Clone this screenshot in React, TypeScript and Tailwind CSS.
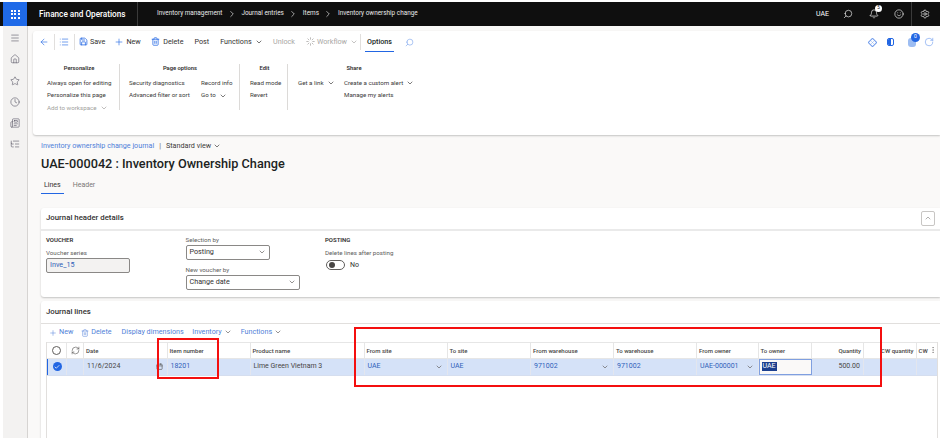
// Inventory ownership change journal, Finance and Operations style form.
import type { ReactNode } from "react";
import {
  ArrowLeft,
  Bell,
  Calendar,
  Check,
  ChevronDown,
  ChevronRight,
  ChevronUp,
  Clock,
  Home,
  List,
  ListTree,
  Loader,
  Menu,
  MoreVertical,
  Newspaper,
  Plus,
  RefreshCw,
  RotateCw,
  Save,
  Search,
  Settings,
  Smile,
  Star,
  Trash2,
  X,
} from "lucide-react";

const FONT = "font-['Roboto',sans-serif]";

function Crumb({ label, last }: { label: string; last?: boolean }) {
  return (
    <>
      <span className="text-[6.4px] text-[#e8e8e8]">{label}</span>
      {!last && <ChevronRight className="mx-[4.5px] h-[10px] w-[10px] text-[#e8e8e8]" strokeWidth={1.6} />}
    </>
  );
}

function Tool({
  icon,
  label,
  off,
  caret,
  ml,
}: {
  icon?: ReactNode;
  label: string;
  off?: boolean;
  caret?: boolean;
  ml: string;
}) {
  return (
    <span className={`flex items-center gap-[2px] text-[7.2px] ${ml} ${off ? "text-[#a8a6a4]" : "text-[#323130]"}`}>
      {icon}
      {label}
      {caret && <ChevronDown className="ml-[1px] h-[8px] w-[8px]" />}
    </span>
  );
}

function Sep({ ml }: { ml: string }) {
  return <span className={`h-[16px] w-px bg-[#e1dfdd] ${ml}`} />;
}

function Option({ label, off, caret }: { label: string; off?: boolean; caret?: boolean }) {
  return (
    <span className={`flex h-[12.5px] items-center gap-[3px] whitespace-nowrap text-[6.2px] ${off ? "text-[#a19f9d]" : "text-[#3b3a39]"}`}>
      {label}
      {caret && <ChevronDown className="h-[8px] w-[8px]" />}
    </span>
  );
}

function Group({ title, width, pl, children, last }: { title: string; width: string; pl: string; children: ReactNode; last?: boolean }) {
  return (
    <div className={`flex h-[46px] flex-col ${width} ${pl} ${last ? "" : "border-r border-[#dcdad8]"}`}>
      <div className="pr-[8px] text-center text-[5.8px] font-semibold leading-[8px] text-[#323130]">{title}</div>
      <div className="mt-[5px] flex">{children}</div>
    </div>
  );
}

function Dropdown({ value, width }: { value: string; width: string }) {
  return (
    <div className={`flex h-[15px] items-center justify-between rounded-[2px] border border-[#8a8886] bg-white pl-[3px] pr-[3px] text-[7.2px] text-[#323130] ${width}`}>
      {value}
      <ChevronDown className="h-[8px] w-[8px] text-[#605e5c]" />
    </div>
  );
}

const COLS: { label: string; width: string; right?: boolean }[] = [
  { label: "Date", width: "w-[83.5px]" },
  { label: "Item number", width: "w-[83px]" },
  { label: "Product name", width: "w-[114px]" },
  { label: "From site", width: "w-[83px]" },
  { label: "To site", width: "w-[83.5px]" },
  { label: "From warehouse", width: "w-[83px]" },
  { label: "To warehouse", width: "w-[83px]" },
  { label: "From owner", width: "w-[61.5px]" },
  { label: "To owner", width: "w-[53.5px]" },
  { label: "Quantity", width: "w-[52px]", right: true },
  { label: "CW quantity", width: "w-[52.5px]", right: true },
];

function Link({ children }: { children: ReactNode }) {
  return <span className="text-[7px] text-[#2f5fb8]">{children}</span>;
}

function Cell({ width, children, caret }: { width: string; children?: ReactNode; caret?: boolean }) {
  return (
    <div className={`flex h-full shrink-0 items-center justify-between border-r border-[#e3e6ee] pl-[3px] pr-[4px] ${width}`}>
      {children}
      {caret && <ChevronDown className="h-[8px] w-[8px] text-[#605e5c]" />}
    </div>
  );
}

export default function App() {
  return (
    <div className={`relative flex h-[438px] w-[940px] flex-col overflow-hidden bg-white ${FONT}`}>
      <div className="mt-[2px] flex h-[24px] shrink-0 items-center bg-[#0f0f0f] pl-[3px] text-white">
        <div className="flex h-full w-[24px] items-center justify-center bg-[#1f6ae8]">
          <div className="grid grid-cols-3 gap-[1.5px]">
            {Array.from({ length: 9 }).map((_, i) => (
              <span key={i} className="h-[2px] w-[2px] bg-white" />
            ))}
          </div>
        </div>
        <span className="ml-[12px] w-[98px] whitespace-nowrap text-[8.2px] font-medium">Finance and Operations</span>
        <span className="h-full w-px bg-[#3a3a3a]" />
        <div className="ml-[19px] flex items-center">
          <Crumb label="Inventory management" />
          <Crumb label="Journal entries" />
          <Crumb label="Items" />
          <Crumb label="Inventory ownership change" last />
        </div>
        <span className="ml-auto text-[7px]">UAE</span>
        <Search className="ml-[14px] h-[10px] w-[10px] -scale-x-100" strokeWidth={1.5} />
        <div className="relative ml-[16px]">
          <Bell className="h-[10px] w-[10px]" strokeWidth={1.6} />
          <span className="absolute -right-[3px] -top-[4px] flex h-[7px] w-[7px] items-center justify-center rounded-full bg-white text-[4.5px] text-[#111]">5</span>
        </div>
        <Smile className="ml-[15px] h-[10px] w-[10px]" strokeWidth={1.5} />
        <span className="ml-[7px] h-full w-px bg-[#3a3a3a]" />
        <Settings className="ml-[8px] mr-[10px] h-[10px] w-[10px]" strokeWidth={1.5} />
      </div>

      <div className="flex min-h-0 flex-1">
        <div className="w-[3px] shrink-0 bg-white" />
        <nav className="flex w-[25px] shrink-0 flex-col items-center gap-[11.3px] border-r border-[#d6d4d2] bg-[#f3f2f1] pt-[7px] text-[#5f5d6b]">
          <Menu className="h-[10px] w-[10px]" strokeWidth={1.5} />
          <Home className="h-[10px] w-[10px]" strokeWidth={1.5} />
          <Star className="h-[10px] w-[10px]" strokeWidth={1.5} />
          <Clock className="h-[10px] w-[10px]" strokeWidth={1.5} />
          <Newspaper className="h-[10px] w-[10px]" strokeWidth={1.5} />
          <ListTree className="h-[10px] w-[10px]" strokeWidth={1.5} />
        </nav>

        <main className="min-w-0 flex-1 bg-[#faf9f8] pt-[5px]">
          <section className="ml-[5px] h-[104px] rounded-l-[3px] bg-white pt-[2px] shadow-[0_1px_2px_rgba(0,0,0,0.22)]">
            <div className="flex h-[18px] items-center">
              <ArrowLeft className="ml-[6px] h-[10px] w-[10px] text-[#2266e3]" strokeWidth={1.5} />
              <Sep ml="ml-[5px]" />
              <List className="ml-[4px] h-[10px] w-[10px] text-[#2266e3]" strokeWidth={1.5} />
              <Sep ml="ml-[5px]" />
              <Tool ml="ml-[4px]" icon={<Save className="h-[9px] w-[9px] text-[#2266e3]" />} label="Save" />
              <Tool ml="ml-[9px]" icon={<Plus className="h-[10px] w-[10px] text-[#2266e3]" strokeWidth={1.5} />} label="New" />
              <Tool ml="ml-[10.5px]" icon={<Trash2 className="mr-[1px] h-[9px] w-[9px] text-[#2266e3]" />} label="Delete" />
              <Tool ml="ml-[11px]" label="Post" />
              <Tool ml="ml-[11px]" label="Functions" caret />
              <Tool ml="ml-[10.5px]" label="Unlock" off />
              <Tool ml="ml-[11px]" icon={<Loader className="h-[9px] w-[9px]" />} label="Workflow" off caret />
              <Sep ml="ml-[2px]" />
              <span className="relative ml-[4px] flex h-full items-center px-[2px] text-[7.2px] font-medium text-[#201f1e]">
                Options
                <span className="absolute bottom-[-1px] left-0 right-0 h-[1.5px] bg-[#2266e3]" />
              </span>
              <Search className="ml-[11px] h-[9px] w-[9px] -scale-x-100 text-[#6f9bec]" strokeWidth={1.5} />
              <div className="ml-auto mr-[6px] flex items-center text-[#4f86ea]">
                <span className="flex h-[7px] w-[7px] rotate-45 items-center justify-center rounded-[1px] border border-[#6f9bec]">
                  <X className="-rotate-45 h-[5px] w-[5px]" strokeWidth={1.5} />
                </span>
                <span className="ml-[11px] flex h-[8px] w-[7px] overflow-hidden rounded-[2px] border border-[#2266e3]">
                  <span className="w-1/2 bg-[#2266e3]" />
                </span>
                <span className="relative ml-[14px] h-[9px] w-[8px] rounded-[3px] bg-[#9dbdf2]">
                  <span className="absolute -right-[4px] -top-[5px] flex h-[9px] w-[9px] items-center justify-center rounded-full bg-[#2266e3] text-[5px] text-white">0</span>
                </span>
                <RotateCw className="ml-[8px] h-[10px] w-[10px]" strokeWidth={1.2} />
              </div>
            </div>

            <div className="mt-[13px] flex">
              <Group title="Personalize" width="w-[87px]" pl="pl-[14px]">
                <div className="flex flex-col">
                  <Option label="Always open for editing" />
                  <Option label="Personalize this page" />
                  <Option label="Add to workspace" off caret />
                </div>
              </Group>
              <Group title="Page options" width="w-[120px]" pl="pl-[9px]">
                <div className="flex w-[72px] flex-col">
                  <Option label="Security diagnostics" />
                  <Option label="Advanced filter or sort" />
                </div>
                <div className="flex flex-col">
                  <Option label="Record info" />
                  <Option label="Go to" caret />
                </div>
              </Group>
              <Group title="Edit" width="w-[48px]" pl="pl-[10px]">
                <div className="flex flex-col">
                  <Option label="Read mode" />
                  <Option label="Revert" />
                </div>
              </Group>
              <Group title="Share" width="w-[130px]" pl="pl-[10px]" last>
                <div className="flex w-[46px] flex-col">
                  <Option label="Get a link" caret />
                </div>
                <div className="flex flex-col">
                  <Option label="Create a custom alert" caret />
                  <Option label="Manage my alerts" />
                </div>
              </Group>
            </div>
          </section>

          <div className="ml-[13px]">
            <div className="mt-[6px] flex items-center text-[7.2px] leading-[10.5px]">
              <span className="text-[#4f7fd8]">Inventory ownership change journal</span>
              <span className="mx-[5px] text-[#605e5c]">|</span>
              <span className="flex items-center gap-[2px] text-[#3b3a39]">
                Standard view
                <ChevronDown className="h-[8px] w-[8px]" />
              </span>
            </div>
            <h1 className="mt-[3px] text-[12.7px] font-medium leading-[17px] text-[#201f1e]">UAE-000042 : Inventory Ownership Change</h1>
            <div className="mt-[8px] flex text-[7px] leading-[10px]">
              <span className="border-b border-[#2266e3] px-[3px] pb-[3px] text-[#323130]">Lines</span>
              <span className="ml-[9px] text-[#7a7876]">Header</span>
            </div>

            <section className="mt-[14px] h-[89px] rounded-l-[3px] bg-white shadow-[0_1px_2px_rgba(0,0,0,0.22)]">
              <div className="flex h-[23px] items-center justify-between border-b-2 border-[#eaeaea] pl-[5px] pr-[5px]">
                <span className="text-[7.8px] font-medium text-[#323130]">Journal header details</span>
                <span className="flex h-[15px] w-[14px] items-center justify-center rounded-[2px] border border-[#c8c6c4]">
                  <ChevronUp className="h-[8px] w-[8px] text-[#8a8886]" />
                </span>
              </div>
              <div className="flex pl-[5px] pt-[4px]">
                <div className="w-[139.5px]">
                  <div className="text-[6px] font-semibold leading-[9px] text-[#323130]">VOUCHER</div>
                  <div className="mt-[5px] text-[6.2px] leading-[9px] text-[#605e5c]">Voucher series</div>
                  <div className="flex h-[15px] w-[84px] items-center rounded-[2px] border border-[#8a8886] bg-[#f3f2f1] pl-[3px] text-[7.2px] text-[#2f5fb8]">Inve_15</div>
                </div>
                <div className="w-[139.5px] pt-[1px]">
                  <div className="text-[6.2px] leading-[9px] text-[#605e5c]">Selection by</div>
                  <Dropdown value="Posting" width="w-[84px]" />
                  <div className="mt-[6px] text-[6.2px] leading-[9px] text-[#605e5c]">New voucher by</div>
                  <Dropdown value="Change date" width="w-[114px]" />
                </div>
                <div>
                  <div className="text-[6px] font-semibold leading-[9px] text-[#323130]">POSTING</div>
                  <div className="mt-[5px] text-[6.2px] leading-[9px] text-[#605e5c]">Delete lines after posting</div>
                  <div className="mt-[2px] flex items-center">
                    <span className="ml-[1px] flex h-[10px] w-[19px] items-center rounded-full border border-[#605e5c] pl-[2px]">
                      <span className="h-[6px] w-[6px] rounded-full bg-[#484644]" />
                    </span>
                    <span className="ml-[5px] text-[7px] text-[#323130]">No</span>
                  </div>
                </div>
              </div>
            </section>

            <section className="mt-[4px] h-[140px] rounded-tl-[3px] bg-white shadow-[0_1px_2px_rgba(0,0,0,0.22)]">
              <div className="flex h-[23px] items-center border-b border-[#e1dfdd] pl-[5px] text-[7.8px] font-medium text-[#323130]">Journal lines</div>
              <div className="flex h-[18px] items-center pl-[8px] text-[7.2px] text-[#4f7fd8]">
                <Plus className="h-[8px] w-[8px]" strokeWidth={1.5} />
                <span className="ml-[2px]">New</span>
                <Trash2 className="ml-[8px] h-[8px] w-[8px]" strokeWidth={1.5} />
                <span className="ml-[2px]">Delete</span>
                <span className="ml-[10px]">Display dimensions</span>
                <span className="ml-[8.5px] flex items-center gap-[2px]">Inventory <ChevronDown className="h-[8px] w-[8px] text-[#605e5c]" /></span>
                <span className="ml-[9px] flex items-center gap-[2px]">Functions <ChevronDown className="h-[8px] w-[8px] text-[#605e5c]" /></span>
              </div>
              <div className="ml-[5px] mr-[2px] h-[100px] border-l border-r border-[#e1dfdd]">
                <div className="flex h-[17px] items-center border-y border-[#e6e6e6] text-[6px] font-medium text-[#484644]">
                  <div className="flex h-full w-[20px] shrink-0 items-center justify-center border-r border-[#e6e6e6]">
                    <span className="h-[9px] w-[9px] rounded-full border border-[#605e5c]" />
                  </div>
                  <div className="flex h-full w-[17px] shrink-0 items-center justify-center border-r border-[#e6e6e6]">
                    <RefreshCw className="h-[9px] w-[9px] text-[#484644]" strokeWidth={1.5} />
                  </div>
                  {COLS.map((c) => (
                    <div key={c.label} className={`flex h-full shrink-0 items-center whitespace-nowrap border-r border-[#e6e6e6] px-[2px] ${c.width} ${c.right ? "justify-end" : ""}`}>
                      {c.label}
                    </div>
                  ))}
                  <div className="flex h-full flex-1 items-center justify-between pl-[2px]">
                    CW
                    <MoreVertical className="h-[8px] w-[8px] text-[#8a8886]" />
                  </div>
                </div>
                <div className="flex h-[17px] items-center border-b border-[#d5deef] bg-[#d5e2f8] text-[7px] text-[#484644]">
                  <div className="flex h-full w-[20px] shrink-0 items-center justify-center border-l-[1.5px] border-r border-l-[#2266e3] border-r-[#e3e6ee]">
                    <span className="flex h-[9px] w-[9px] items-center justify-center rounded-full bg-[#2266e3]">
                      <Check className="h-[6px] w-[6px] text-white" strokeWidth={3} />
                    </span>
                  </div>
                  <Cell width="w-[17px]" />
                  <Cell width="w-[83.5px]">
                    <span>11/6/2024</span>
                    <Calendar className="h-[7px] w-[7px] text-[#484644]" />
                  </Cell>
                  <Cell width="w-[83px]"><Link>18201</Link></Cell>
                  <Cell width="w-[114px]">Lime Green Vietnam 3</Cell>
                  <Cell width="w-[83px]" caret><Link>UAE</Link></Cell>
                  <Cell width="w-[83.5px]"><Link>UAE</Link></Cell>
                  <Cell width="w-[83px]" caret><Link>971002</Link></Cell>
                  <Cell width="w-[83px]"><Link>971002</Link></Cell>
                  <Cell width="w-[61.5px]" caret><Link>UAE-000001</Link></Cell>
                  <div className="flex h-full w-[53.5px] shrink-0 items-center border border-[#7f9fe0] bg-[#faf9f8] pl-[2px]">
                    <span className="bg-[#1b3f8f] px-px leading-[9px] text-white">UAE</span>
                  </div>
                  <div className="flex h-full w-[52px] shrink-0 items-center justify-end border-r border-[#e3e6ee] pr-[3px]">500.00</div>
                  <Cell width="w-[52.5px]" />
                  <div className="flex-1" />
                </div>
              </div>
            </section>
          </div>
        </main>
      </div>

      <div className="absolute left-[157px] top-[338px] h-[41px] w-[62px] border-2 border-[#f40f0f]" />
      <div className="absolute left-[354px] top-[327px] h-[60px] w-[528px] border-2 border-[#f40f0f]" />
    </div>
  );
}
